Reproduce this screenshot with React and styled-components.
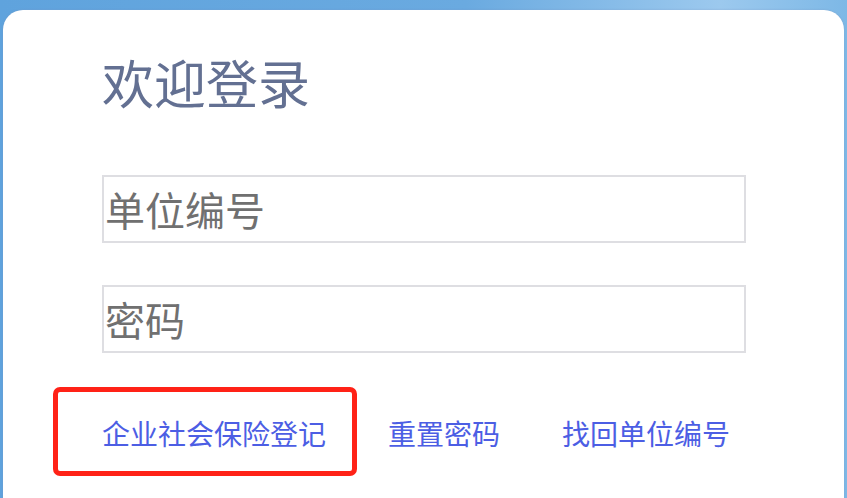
import styled, { createGlobalStyle } from "styled-components"

const GlobalStyle = createGlobalStyle`
  html, body {
    margin: 0;
    padding: 0;
    height: 100%;
  }
  body {
    font-family: "Noto Sans CJK SC", "Microsoft YaHei", sans-serif;
    background: linear-gradient(90deg, #5fa3dd 0%, #6aaae0 55%, #9cc9ee 85%, #7db8e6 100%);
    overflow: hidden;
  }
`

// Styled Components
const Page = styled.div`
  height: 498px;
  padding: 10px 3px 0 3px;
  box-sizing: border-box;
  overflow: hidden;
`
const Card = styled.div`
  height: 520px;
  background: #fff;
  border-radius: 20px;
  box-shadow: 0 0 2px rgba(120, 150, 190, .6);
  padding: 42px 0 0 99px;
  box-sizing: border-box;
`
const Title = styled.h1`
  margin: 0 0 63px 0;
  font-size: 52px;
  font-weight: 400;
  line-height: 60px;
  color: #637092;
`
const Field = styled.input`
  display: block;
  width: 644px;
  height: 68px;
  box-sizing: border-box;
  margin-bottom: 42px;
  padding: 0 0 0 1px;
  border: 2px solid #dedee2;
  border-radius: 0;
  outline: none;
  font-family: inherit;
  font-size: 40px;
  color: #333;
  &::placeholder {
    color: #707070;
  }
`
const Links = styled.div`
  position: relative;
  display: flex;
  gap: 62px;
  margin-top: -10px;
  padding-top: 28px;
`
const Link = styled.a`
  font-size: 28px;
  line-height: 40px;
  color: #4c5ee4;
  text-decoration: none;
  cursor: pointer;
`
const Highlight = styled.div`
  position: absolute;
  left: -49px;
  top: 2px;
  width: 304px;
  height: 89px;
  box-sizing: border-box;
  border: 5px solid #ff2217;
  border-radius: 7px;
  pointer-events: none;
`

export default function App() {
  return (
    <>
      <GlobalStyle />
      <Page>
        <Card>
          <Title>欢迎登录</Title>
          <Field placeholder="单位编号" />
          <Field type="password" placeholder="密码" />
          <Links>
            <Highlight />
            <Link>企业社会保险登记</Link>
            <Link>重置密码</Link>
            <Link>找回单位编号</Link>
          </Links>
        </Card>
      </Page>
    </>
  )
}
